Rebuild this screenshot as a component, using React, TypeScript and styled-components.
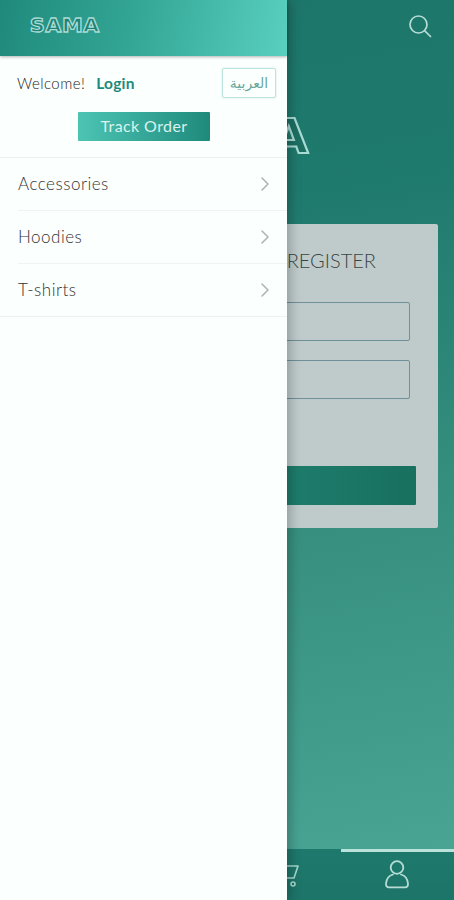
import React from 'react';
import styled, { createGlobalStyle } from 'styled-components';
import { ChevronRight } from 'lucide-react';

const GlobalStyle = createGlobalStyle`
  html, body {
    margin: 0;
    padding: 0;
    background: #1f7a6e;
  }
  * {
    box-sizing: border-box;
  }
`;

const Screen = styled.div`
  position: relative;
  width: 454px;
  height: 900px;
  overflow: hidden;
  display: flex;
  flex-direction: column;
  font-family: Lato, 'Open Sans', sans-serif;
  background: linear-gradient(170deg, #1d7569 0%, #1f7a6e 25%, #37907f 60%, #4ca797 100%);
`;

const TopBar = styled.header`
  height: 56px;
  flex-shrink: 0;
  display: flex;
  justify-content: flex-end;
  align-items: center;
  padding: 0 21px 5px 0;
`;

const Logo = styled.div<{ $size: number; $fill: string }>`
  font-family: 'DejaVu Sans', sans-serif;
  font-weight: 700;
  font-size: ${(p) => p.$size}px;
  line-height: 1;
  color: ${(p) => p.$fill};
  -webkit-text-stroke: ${(p) => (p.$size > 30 ? 2 : 1.2)}px #a9dcd4;
  letter-spacing: 0.02em;
  transform: scale(1.1, 1.05);
`;

const HeroLogo = styled.div`
  height: 168px;
  display: flex;
  justify-content: flex-end;
  padding: 59px 152px 0 0;
`;

const Card = styled.section`
  width: 422px;
  height: 304px;
  margin-left: 16px;
  padding: 25px 22px 0 0;
  display: flex;
  flex-direction: column;
  align-items: flex-end;
  background: #bfcbcb;
  border-radius: 2px;
`;

const CardTitle = styled.h2`
  margin: 0 40px 31px 0;
  font-size: 20px;
  font-weight: 300;
  line-height: 22px;
  color: #3a4444;
`;

const Field = styled.div`
  width: 380px;
  height: 39px;
  margin: 0 6px 19px 0;
  border: 1.5px solid #70909a;
  border-radius: 2px;
`;

const SubmitBar = styled.div`
  width: 394px;
  height: 39px;
  margin-top: 48px;
  background: linear-gradient(90deg, #2a9586 0%, #18705f 100%);
  border-radius: 1px;
`;

const Spacer = styled.div`
  flex: 1;
`;

const TabBar = styled.nav`
  position: relative;
  height: 51px;
  flex-shrink: 0;
  display: grid;
  grid-template-columns: repeat(4, 1fr);
  background: linear-gradient(180deg, #1e796d 0%, #1d7468 100%);
`;

const Tab = styled.div<{ $active?: boolean }>`
  display: flex;
  justify-content: center;
  align-items: center;
  border-top: 3px solid ${(p) => (p.$active ? '#b9e2da' : 'transparent')};
  padding-bottom: 3px;
`;

const Drawer = styled.aside`
  position: absolute;
  top: 0;
  left: 0;
  bottom: 0;
  width: 287px;
  display: flex;
  flex-direction: column;
  background: #fbfffe;
  box-shadow: 4px 0 10px rgba(0, 0, 0, 0.22);
`;

const DrawerHeader = styled.div`
  height: 56px;
  flex-shrink: 0;
  display: flex;
  align-items: center;
  padding: 0 0 5px 33px;
  background: linear-gradient(100deg, #1f8a7c 0%, #33a595 45%, #58cfbf 100%);
  box-shadow: 0 1px 3px rgba(0, 0, 0, 0.3);
`;

const WelcomeRow = styled.div`
  display: flex;
  align-items: center;
  height: 30px;
  margin-top: 12px;
  padding: 0 11px 0 17px;
`;

const Welcome = styled.span`
  font-size: 15px;
  font-weight: 300;
  letter-spacing: 0.45px;
  color: #222;
`;

const LoginLink = styled.a`
  margin-left: 11px;
  font-size: 15.5px;
  font-weight: 700;
  letter-spacing: 0.2px;
  color: #1f8a7c;
`;

const LangButton = styled.div`
  margin-left: auto;
  width: 54px;
  height: 30px;
  display: flex;
  justify-content: center;
  align-items: center;
  border: 1.5px solid #bfe3dd;
  border-radius: 2px;
  font-family: 'DejaVu Sans', sans-serif;
  font-size: 14px;
  color: #6aa79d;
  box-shadow: 0 0 2px rgba(60, 150, 135, 0.25);
`;

const TrackRow = styled.div`
  display: flex;
  padding: 14px 0 16px 78px;
  border-bottom: 1px solid #edf2f1;
`;

const TrackButton = styled.div`
  width: 132px;
  height: 29px;
  display: flex;
  justify-content: center;
  align-items: center;
  padding-bottom: 2px;
  font-size: 16px;
  letter-spacing: 0.4px;
  color: #d8f3ee;
  background: linear-gradient(90deg, #4cc4b4 0%, #1f8a7c 100%);
  border-radius: 1px;
`;

const MenuList = styled.ul`
  list-style: none;
  margin: 0;
  padding: 0;
  border-bottom: 1px solid #edf2f1;
`;

const MenuRow = styled.li`
  height: 53px;
  display: flex;
  justify-content: space-between;
  align-items: center;
  margin-left: 18px;
  padding: 0 10px 2px 0;
  font-size: 17px;
  font-weight: 300;
  letter-spacing: 0.5px;
  color: #333;
  border-bottom: 1px solid #f0f4f3;

  &:last-child {
    height: 52px;
    border-bottom: none;
  }

  svg {
    color: #b0b5b4;
    margin-top: 2px;
  }
`;

const menu = ['Accessories', 'Hoodies', 'T-shirts'];

const SearchIcon = () => (
  <svg width="26" height="26" viewBox="0 0 26 26" fill="none" stroke="#b5ddd6" strokeWidth="1.7" strokeLinecap="round">
    <circle cx="11.5" cy="11.5" r="8.5" />
    <path d="M17.8 17.8L23.5 23.5" />
  </svg>
);

const CartIcon = () => (
  <svg width="30" height="30" viewBox="0 0 30 30" fill="none" stroke="#a7d8cf" strokeWidth="1.6" strokeLinecap="round" strokeLinejoin="round">
    <path d="M2 6H29L25 18H8L5 6" />
    <circle cx="12" cy="24" r="2" />
    <circle cx="24" cy="24" r="2" />
  </svg>
);

const UserIcon = () => (
  <svg width="24" height="29" viewBox="0 0 24 29" fill="none" stroke="#b5ddd6" strokeWidth="1.8" strokeLinecap="round" strokeLinejoin="round">
    <circle cx="12" cy="7.5" r="6.3" />
    <path d="M8 14.5C4 15.5 1.5 19 1 23.5C0.9 26.2 2 27.3 4 27.3H20C22 27.3 23.1 26.2 23 23.5C22.5 19 20 15.5 16 14.5" />
  </svg>
);

export default function App() {
  return (
    <Screen>
      <GlobalStyle />
      <TopBar>
        <SearchIcon />
      </TopBar>
      <HeroLogo>
        <Logo $size={46} $fill="#1d6f64">SAMA</Logo>
      </HeroLogo>
      <Card>
        <CardTitle>REGISTER</CardTitle>
        <Field />
        <Field />
        <SubmitBar />
      </Card>
      <Spacer />
      <TabBar>
        <Tab />
        <Tab />
        <Tab>
          <CartIcon />
        </Tab>
        <Tab $active>
          <UserIcon />
        </Tab>
      </TabBar>
      <Drawer>
        <DrawerHeader>
          <Logo $size={19} $fill="#1f8175">SAMA</Logo>
        </DrawerHeader>
        <WelcomeRow>
          <Welcome>Welcome!</Welcome>
          <LoginLink>Login</LoginLink>
          <LangButton>العربية</LangButton>
        </WelcomeRow>
        <TrackRow>
          <TrackButton>Track Order</TrackButton>
        </TrackRow>
        <MenuList>
          {menu.map((item) => (
            <MenuRow key={item}>
              {item}
              <ChevronRight size={24} strokeWidth={1.6} />
            </MenuRow>
          ))}
        </MenuList>
      </Drawer>
    </Screen>
  );
}
